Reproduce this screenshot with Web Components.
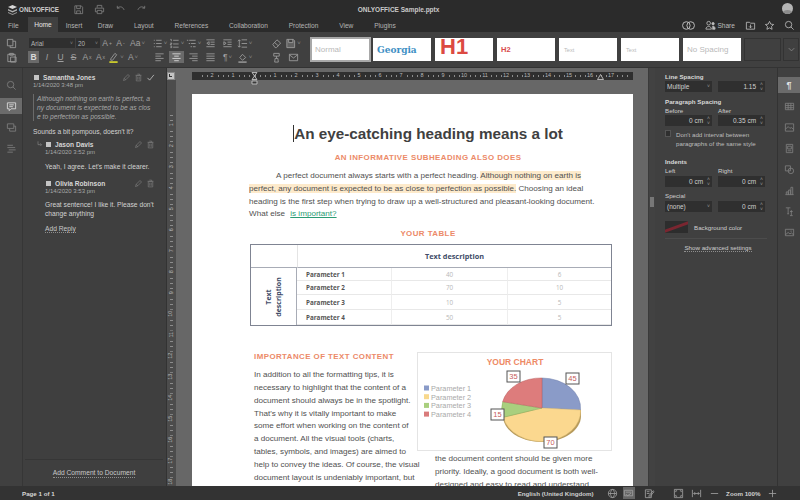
<!DOCTYPE html>
<html lang="en">
<head>
<meta charset="utf-8">
<title>ONLYOFFICE Sample.pptx</title>
<style>
  html, body { margin: 0; height: 100%; background: #404040; overflow: hidden; }
  body { font: 7.4px "Liberation Sans", Arial, sans-serif; color: #d6d6d6; }
</style>
</head>
<body>
<oo-app></oo-app>

<script>
const ICONS = {
  save: '<path d="M2 2h7l1.500 1.500V10.500H2z M4 2v3h4V2 M4 10.500V7.500h4v3"/>',
  print: '<path d="M3.500 4V1.500h5V4 M1.500 4.500h9v4h-2 M3.500 8.500h-2v-4 M3.500 7h5v3.500h-5z"/>',
  undo: '<path d="M2.500 4.500c3-2.500 6-1.500 7.500 2 M2.500 2v2.500H5"/>',
  redo: '<path d="M9.500 4.500c-3-2.500-6-1.500-7.500 2 M9.500 2v2.500H7"/>',
  copy: '<path d="M1.500 1.500h6v7h-6z M4.500 8.500v2h6v-7h-3"/>',
  paste: '<path d="M2 2.500h8v8H2z M4 1.500h4v2H4z M5 5.500h6v5.500H5z"/>',
  bullets: '<path d="M2 2.500h1 M2 6h1 M2 9.500h1 M4.500 2.500h6 M4.500 6h6 M4.500 9.500h6"/>',
  numbers: '<path d="M1.500 1.500h1v2 M1.500 5.500h1.500v1H1.500v1H3 M1.500 9h1.500v1.500h-1.500 M4.500 2.500h6 M4.500 6.500h6 M4.500 10h6"/>',
  multi: '<path d="M1 2.500h1.500 M3.500 2.500h7 M3 6h1.500 M5.500 6h5 M5 9.500h1.500 M7.500 9.500h3"/>',
  indentless: '<path d="M1.500 2h9 M6 4.500h4.500 M6 7h4.500 M1.500 9.500h9 M4.500 4L2 5.750 4.500 7.500z"/>',
  indentmore: '<path d="M1.500 2h9 M6 4.500h4.500 M6 7h4.500 M1.500 9.500h9 M2 4l2.500 1.750L2 7.500z"/>',
  linespace: '<path d="M5 2h6 M5 6h6 M5 10h6 M2.500 2v8 M1 3.500L2.500 2 4 3.500 M1 8.500L2.500 10 4 8.500"/>',
  left: '<path d="M1.500 2h9 M1.500 4.500h6 M1.500 7h9 M1.500 9.500h6"/>',
  center: '<path d="M1.500 2h9 M3.500 4.500h5 M1.500 7h9 M3.500 9.500h5"/>',
  right: '<path d="M1.500 2h9 M4.500 4.500h6 M1.500 7h9 M4.500 9.500h6"/>',
  justify: '<path d="M1.500 2h9 M1.500 4.500h9 M1.500 7h9 M1.500 9.500h9"/>',
  shade: '<path d="M3 6l3-3.500L9.500 6 6 9z"/><path d="M1.500 11h9" stroke-width="1.500"/>',
  hilite: '<path d="M3 7.500l4.500-6 2 1.500-4.500 6H3z"/><path d="M1.500 11h9" stroke="#d8d82c" stroke-width="1.800"/>',
  eraser: '<path d="M2 7l4.500-5L10.500 5.500 6 10.500H4.500z M4 5l4 3.500"/>',
  styles: '<path d="M2 1.500h7l1.500 1.500v7.500H2z M4 1.500v3.500h4.500V1.500" fill="currentColor" fill-opacity=".35"/>',
  brush: '<path d="M3 1.500h6v3H3z M6 4.500V7 M4.500 7h3l.5 4H4z"/>',
  mail: '<path d="M1.500 2.500h9v7h-9z M1.500 3l4.500 3.500L10.500 3"/>',
  search: '<circle cx="5" cy="5" r="3.500"/><path d="M7.500 7.500l3 3"/>',
  comment: '<path d="M1.500 2h9v6.500h-5L3.500 10.500v-2h-2z M3.500 4.200h5 M3.500 6.200h4"/>',
  chat: '<path d="M1.500 2h7v5h-7z M8.500 4.500h2v5.500h-6.500V7"/>',
  nav: '<path d="M1.500 2.500h6 M1.500 5h8.500 M3 7.500h7.500 M1.500 10h6"/>',
  pencil: '<path d="M2 10l1-3 5-5 2 2-5 5z M3 7l2 2"/>',
  trash: '<path d="M3 3.500h6v7H3z M2 3h8 M4.500 1.500h3V3 M5 5v4 M7 5v4"/>',
  check: '<path d="M2 6.500l2.800 3L10.500 2.500"/>',
  reply: '<path d="M3 2v5h5 M6.500 5l2 2-2 2"/>',
  users: '<circle cx="4" cy="6" r="3.500"/><circle cx="8" cy="6" r="3.500"/>',
  share: '<circle cx="4" cy="3.500" r="2"/><path d="M1 10c0-4 6-4 6 0z"/><circle cx="8.800" cy="4" r="1.300" fill="currentColor"/><path d="M8 10h3c0-3-1.500-3.500-3-3" fill="currentColor"/>',
  folder: '<path d="M1.500 2.500h3.500l1 1h4.500v6.500h-9z M6 5v3.500 M4.500 7L6 8.500 7.500 7"/>',
  star: '<path d="M6 1.500l1.400 3 3.100.4-2.300 2.100.6 3.200L6 8.600 3.200 10.200l.6-3.200L1.500 4.900l3.100-.4z"/>',
  table: '<path d="M1.500 2.500h9v7h-9z M1.500 5h9 M1.500 7.300h9 M4.500 2.500v7 M7.500 2.500v7"/>',
  image: '<path d="M1.500 2h9v8h-9z M1.500 8l3-3 2 2 1.500-1 2.500 2"/>',
  slide: '<path d="M2.500 1.500h7v9h-7z M4 3.500h4v3H4z M4 8.500h4"/>',
  shape: '<path d="M1.500 2h5.500v5.500h-5.500z"/><circle cx="7.500" cy="7.500" r="3"/>',
  chart: '<path d="M1.500 10.500h9 M2.500 10.500v-3h2v3 M5 10.500V5.500h2v5 M7.500 10.500V2.500h2v8"/>',
  art: '<path d="M2 2h5 M4.500 2v6.500 M3.500 8.500h2 M8 4.500v6 M6.500 10.500h3 M6.500 6h3"/>',
  mailimg: '<path d="M1.500 2.500h9v7h-9z M1.500 8.500l3-2.500 2 1.500 1.500-1 2.500 2 M7 4.500h1.500"/>',
  globe: '<circle cx="6" cy="6" r="4.500"/><path d="M1.500 6h9 M6 1.500c-3 3-3 6 0 9 M6 1.500c3 3 3 6 0 9"/>',
  spell: '<path d="M1.500 2.500h9v6h-9z M3 4.500h6 M3 6.500l2 2 4-3"/>',
  track: '<path d="M1.500 2h6.500v8.500h-6.500z M3 4h3 M3 6h3 M5 9l5-6 1 1-5 6z"/>',
  fit: '<path d="M1.500 1.500h9v9h-9z M3 4.500V3h1.500 M7.500 3H9v1.500 M3 7.500V9h1.500 M9 7.500V9H7.500"/>',
  fitwidth: '<path d="M1.500 2v8 M10.500 2v8 M3 6h6 M4.500 4.500L3 6l1.500 1.500 M7.500 4.500L9 6 7.500 7.500"/>',
  minus: '<path d="M2 6h8"/>',
  plus: '<path d="M2 6h8 M6 2v8"/>',
  caret: '<path d="M3 4.500l3 3 3-3"/>'
};

class OoIcon extends HTMLElement {
  connectedCallback () {
    if (this.shadowRoot) return;
    const size = this.getAttribute('size') || 11;
    this.attachShadow({mode: 'open'}).innerHTML = `
      <style>:host { display: inline-flex; flex: none; } svg { display: block; }</style>
      <svg width="${size}" height="${size}" viewBox="0 0 12 12" fill="none" stroke="currentColor" stroke-width=".9">${ICONS[this.getAttribute('name')] || ''}</svg>`;
  }
}
customElements.define('oo-icon', OoIcon);

// one toolbar cell: either an icon or slotted glyph text
class OoBtn extends HTMLElement {
  connectedCallback () {
    if (this.shadowRoot) return;
    const name = this.getAttribute('icon');
    const caret = this.hasAttribute('caret');
    this.attachShadow({mode: 'open'}).innerHTML = `
      <style>
      :host {
        display: inline-flex; align-items: center; justify-content: center; gap: 1px;
        width: var(--w, 13px); height: 12px; color: #a0a0a0; flex: none;
        font: 8.500px "Liberation Sans", sans-serif;
      }
      :host([active]) { background: #6a6a6a; color: #e4e4e4; }
      i { font-size: 6px; font-style: normal; color: #8a8a8a; }
      </style>
      ${name ? `<oo-icon name="${name}"></oo-icon>` : '<slot></slot>'}
      ${caret ? '<i>&#709;</i>' : ''}`;
  }
}
customElements.define('oo-btn', OoBtn);

class OoTitlebar extends HTMLElement {
  constructor () {
    super();
    this.attachShadow({mode: 'open'}).innerHTML = `
      <style>
      :host {
        display: flex; align-items: center; height: 19px; background: #2b2b2b; color: #c8c8c8;
        position: relative; padding-left: 8px; gap: 13px;
      }
      .logo { display: flex; align-items: center; gap: 2px; font: bold 6.300px "Liberation Sans", sans-serif; color: #cfcfcf; width: 47px; margin-right: 5px; flex: none; }
      .logo svg { flex: none; }
      .title { position: absolute; left: 0; right: 3px; text-align: center; font: bold 6.500px "Liberation Sans", sans-serif; color: #c9c9c9; }
      .tools { display: flex; gap: 10px; color: #7f7f7f; }
      .avatar { position: absolute; right: 7px; top: 3px; width: 11px; height: 11px; border-radius: 50%; background: #b5b5b5; overflow: hidden; }
      .avatar::after { content: ""; display: block; width: 9px; height: 5px; margin: 7px auto 0; border-radius: 50%; background: #8c8c8c; }
      </style>
      <div class="logo">
        <svg width="9" height="10" viewBox="0 0 9 10"><path d="M4.500 0L9 2 4.500 4 0 2z" fill="#d8d8d8"/><path d="M0 4l4.500 2L9 4v1.500L4.500 7.500 0 5.500z" fill="#b0b0b0"/><path d="M0 7l4.500 2L9 7v1L4.500 10 0 8z" fill="#9a9a9a"/></svg>
        <span>ONLYOFFICE</span>
      </div>
      <div class="tools">
        <oo-icon name="save"></oo-icon><oo-icon name="print"></oo-icon><oo-icon name="undo"></oo-icon><oo-icon name="redo"></oo-icon>
      </div>
      <div class="title">ONLYOFFICE Sample.pptx</div>
      <div class="avatar"></div>`;
  }
}
customElements.define('oo-titlebar', OoTitlebar);

class OoTabs extends HTMLElement {
  constructor () {
    super();
    const tabs = ['File', 'Home', 'Insert', 'Draw', 'Layout', 'References', 'Collaboration', 'Protection', 'View', 'Plugins'];
    this.attachShadow({mode: 'open'}).innerHTML = `
      <style>
      :host {
        display: flex; align-items: stretch; height: 13px; background: #2b2b2b; color: #b4b4b4;
        padding-left: 8px; font: 6.600px "Liberation Sans", sans-serif; position: relative;
      }
      span { display: flex; align-items: center; margin-right: 20.800px; }
      span.near { margin-right: 15.500px; }
      span.on { background: #404040; margin: -2px 8px 0 -6px; padding: 0 6px; color: #e6e6e6; }
      .right { position: absolute; right: 5.500px; top: 0; height: 13px; display: flex; align-items: center; gap: 8px; color: #bcbcbc; }
      .right b { font-weight: normal; margin-left: -7px; }
      </style>
      ${tabs.map((t, i) => `<span class="${i === 1 ? 'on' : i < 3 ? 'near' : ''}">${t}</span>`).join('')}
      <div class="right">
        <oo-icon name="users" size="13"></oo-icon>
        <oo-icon name="share" style="margin-left:2px"></oo-icon><b>Share</b>
        <oo-icon name="folder" style="margin-left:1.500px"></oo-icon>
        <oo-icon name="star"></oo-icon>
        <oo-icon name="search" style="margin-left:1px"></oo-icon>
      </div>`;
  }
}
customElements.define('oo-tabs', OoTabs);

class OoStyleTile extends HTMLElement {
  constructor () {
    super();
    this.attachShadow({mode: 'open'}).innerHTML = `
      <style>
      :host {
        display: flex; align-items: center; width: 58px; height: 23px; box-sizing: border-box;
        background: #fff; padding-left: 4px; flex: none;
        font: 8px "Liberation Sans", sans-serif; color: #b9b9b9;
      }
      :host([selected]) { width: 61px; height: 25px; margin: -1px -2px 0 0; border: 2px solid #a8a8a8; padding-left: 3px; }
      :host([blank]) { background: transparent; outline: 1px solid #333; outline-offset: -1px; width: 37px; margin-left: -1px; }
      </style>
      <slot></slot>`;
  }
}
customElements.define('oo-style-tile', OoStyleTile);

class OoToolbar extends HTMLElement {
  constructor () {
    super();
    this.attachShadow({mode: 'open'}).innerHTML = `
      <style>
      :host {
        display: flex; height: 36px; background: #404040; box-sizing: border-box;
        padding: 5px 0 0 5px; border-bottom: 1px solid #333; color: #b0b0b0;
      }
      .group { display: flex; flex-direction: column; gap: 2px; flex: none; }
      .row { display: flex; align-items: center; height: 12px; }
      .select {
        height: 10px; background: #2f2f2f; color: #b4b4b4; display: flex; align-items: center;
        justify-content: space-between; padding: 0 2px; box-sizing: border-box; flex: none;
        font-size: 6.300px; margin-right: 1px;
      }
      .select i { font-style: normal; font-size: 5px; color: #8a8a8a; }
      .clip { width: 24px; }
      .font { width: 122px; }
      .para { width: 110px; --w: 17px; }
      .para2 { margin-left: 6.500px; --w: 17px; width: 39px; margin-right: 3.500px; }
      .gallery { display: flex; gap: 4px; margin-top: 1px; align-items: flex-start; flex: none; }
      .chev { width: 16px; height: 23px; margin-left: -2px; display: flex; align-items: center; justify-content: center; outline: 1px solid #333; outline-offset: -1px; color: #888; flex: none; }
      .h1 { font: bold 22px/22px "Liberation Sans", sans-serif; color: #dc4a42; margin: -2px 0 0 1px; align-self: flex-start; }
      .h2 { font: bold 7.500px "Liberation Sans", sans-serif; color: #d84a4a; }
      .geo { font: bold 9px "DejaVu Serif", serif; color: #3d8fc4; }
      .tiny { font-size: 5.600px; margin-left: 1px; }
      b { font-size: 8.500px; color: #d8d8d8; }
      </style>
      <div class="group clip">
        <div class="row"><oo-btn icon="copy"></oo-btn></div>
        <div class="row"><oo-btn icon="paste"></oo-btn></div>
      </div>
      <div class="group font">
        <div class="row">
          <div class="select" style="width:46px"><span>Arial</span><i>&#709;</i></div>
          <div class="select" style="width:24px"><span>20</span><i>&#709;</i></div>
          <oo-btn style="--w:13px;margin-left:-.5px">A<sup style="font-size:5px">+</sup></oo-btn>
          <oo-btn style="--w:14px">A<sup style="font-size:5px">-</sup></oo-btn>
          <oo-btn style="--w:20px" caret>Aa</oo-btn>
        </div>
        <div class="row" style="margin-left:-1px">
          <oo-btn active style="--w:11px;margin-right:1px"><b>B</b></oo-btn>
          <oo-btn style="--w:14px"><i>I</i></oo-btn>
          <oo-btn><u>U</u></oo-btn>
          <oo-btn><s>S</s></oo-btn>
          <oo-btn style="--w:14px">A<sup style="font-size:5px">x</sup></oo-btn>
          <oo-btn>A<sub style="font-size:5px">x</sub></oo-btn>
          <oo-btn icon="hilite" style="--w:18px" caret></oo-btn>
          <oo-btn style="--w:16px" caret>A</oo-btn>
        </div>
      </div>
      <div class="group para">
        <div class="row">
          <oo-btn icon="bullets" caret></oo-btn><oo-btn icon="numbers" caret></oo-btn><oo-btn icon="multi" caret></oo-btn>
          <oo-btn icon="indentless"></oo-btn><oo-btn icon="indentmore"></oo-btn><oo-btn icon="linespace" caret></oo-btn>
        </div>
        <div class="row">
          <oo-btn icon="left"></oo-btn><oo-btn icon="center" active style="--w:15px;margin:0 1px"></oo-btn><oo-btn icon="right"></oo-btn>
          <oo-btn icon="justify"></oo-btn><oo-btn caret>&para;</oo-btn><oo-btn icon="shade" caret></oo-btn>
        </div>
      </div>
      <div class="group para2">
        <div class="row"><oo-btn icon="eraser"></oo-btn><oo-btn icon="styles" caret></oo-btn></div>
        <div class="row"><oo-btn icon="brush"></oo-btn><oo-btn icon="mail"></oo-btn></div>
      </div>
      <div class="gallery">
        <oo-style-tile selected>Normal</oo-style-tile>
        <oo-style-tile><span class="geo">Georgia</span></oo-style-tile>
        <oo-style-tile><span class="h1">H1</span></oo-style-tile>
        <oo-style-tile><span class="h2">H2</span></oo-style-tile>
        <oo-style-tile><span class="tiny">Text</span></oo-style-tile>
        <oo-style-tile><span class="tiny">Text</span></oo-style-tile>
        <oo-style-tile>No Spacing</oo-style-tile>
        <oo-style-tile blank></oo-style-tile>
        <div class="chev"><oo-icon name="caret"></oo-icon></div>
      </div>`;
  }
}
customElements.define('oo-toolbar', OoToolbar);

class OoSidebar extends HTMLElement {
  constructor () {
    super();
    const names = (this.getAttribute('icons') || '').split(' ');
    const on = this.getAttribute('on');
    this.attachShadow({mode: 'open'}).innerHTML = `
      <style>
      :host {
        display: flex; flex-direction: column; gap: 5px; width: 22px; flex: none; padding-top: 9px;
        box-sizing: border-box; background: #404040; color: #808080;
      }
      div { height: 16px; display: flex; align-items: center; justify-content: center; font: bold 9px "Liberation Sans", sans-serif; }
      .on { background: #6b6b6b; color: #e2e2e2; }
      </style>
      ${names.map(n => `<div class="${n === on ? 'on' : ''}">${n === 'para' ? '&para;' : `<oo-icon name="${n}"></oo-icon>`}</div>`).join('')}`;
  }
}
customElements.define('oo-sidebar', OoSidebar);

class OoComment extends HTMLElement {
  constructor () {
    super();
    const actions = this.getAttribute('actions').split(' ');
    this.attachShadow({mode: 'open'}).innerHTML = `
      <style>
      :host { display: block; color: #d2d2d2; }
      .head { display: flex; align-items: center; height: 10px; font-weight: bold; color: #d6d6d6; font-size: 6.600px; }
      .sq { width: 5px; height: 5px; background: #c4c4c4; margin: 0 4px 0 1px; }
      .act { margin-left: auto; display: flex; gap: 3px; color: #7c7c7c; }
      .act .ok { color: #dcdcdc; }
      .date { height: 9px; line-height: 9px; color: #a8a8a8; font-size: 6px; margin-bottom: 1px; margin-top: -1px; }
      </style>
      <div class="head"><span class="sq"></span>${this.getAttribute('author')}
        <span class="act">${actions.map(a => `<oo-icon name="${a}" size="9" class="${a === 'check' ? 'ok' : ''}"></oo-icon>`).join('')}</span>
      </div>
      <div class="date">${this.getAttribute('date')}</div>
      <slot></slot>`;
  }
}
customElements.define('oo-comment', OoComment);

class OoComments extends HTMLElement {
  constructor () {
    super();
    this.attachShadow({mode: 'open'}).innerHTML = `
      <style>
      :host {
        display: flex; flex-direction: column; width: 144px; flex: none; box-sizing: border-box;
        border-left: 1px solid #363636; background: #3f3f3f; font: 6.700px/9px "Liberation Sans", sans-serif;
      }
      .list { flex: 1; padding: 4px 11px 0 10px; }
      .quote { margin: 4px 0 6px; border-left: 1px solid #6a6a6a; padding-left: 3px; font-style: italic; color: #a8a8a8; white-space: nowrap; height: 27px; }
      .text { white-space: nowrap; }
      .reply { margin: 3px 0 0 12px; position: relative; }
      .mark { position: absolute; left: -9px; top: 1px; color: #8c8c8c; }
      .link { border-bottom: 1px dotted #8e8e8e; color: #c8c8c8; }
      .foot { height: 26px; margin: 0 3px 0 2px; border-top: 1px solid #363636; display: flex; justify-content: center; align-items: center; }
      </style>
      <div class="list">
        <oo-comment author="Samantha Jones" date="1/14/2020 3:48 pm" actions="pencil trash check">
          <div class="quote">Although nothing on earth is perfect, a<br>ny document is expected to be as clos<br>e to perfection as possible.</div>
          <div class="text">Sounds a bit pompous, doesn't it?</div>
        </oo-comment>
        <div class="reply">
          <oo-icon class="mark" name="reply" size="8"></oo-icon>
          <oo-comment author="Jason Davis" date="1/14/2020 3:52 pm" actions="pencil trash">
            <div class="text" style="margin-top:5px">Yeah, I agree. Let's make it clearer.</div>
          </oo-comment>
        </div>
        <div class="reply" style="margin-top:7px">
          <oo-comment author="Olivia Robinson" date="1/14/2020 3:53 pm" actions="pencil trash">
            <div class="text" style="margin-top:4px">Great sentence! I like it. Please don't<br>change anything</div>
          </oo-comment>
          <div style="margin-top:6px"><span class="link">Add Reply</span></div>
        </div>
      </div>
      <div class="foot"><span class="link">Add Comment to Document</span></div>`;
  }
}
customElements.define('oo-comments', OoComments);

// numbered ruler, laid out as a row (or column) of 21px cells
class OoRuler extends HTMLElement {
  constructor () {
    super();
    const labels = (this.getAttribute('labels') || '').split(',');
    this.attachShadow({mode: 'open'}).innerHTML = `
      <style>
      :host { display: flex; flex: none; overflow: hidden; color: #b8b8b8; font: 5.500px/1 "Liberation Sans", sans-serif; background: #2f2f2f; height: 8px; }
      :host([vertical]) { flex-direction: column; width: 9px; height: auto; background: #4c4c4c; }
      span {
        flex: 0 0 21px; display: flex; align-items: center; justify-content: center;
        background: repeating-linear-gradient(90deg, #8c8c8c 0 1px, transparent 1px 5.250px) 0 55% / 100% 2px no-repeat;
      }
      :host([vertical]) span { background: repeating-linear-gradient(180deg, #8c8c8c 0 1px, transparent 1px 5.250px) 55% 0 / 3px 100% no-repeat; }
      :host([vertical]) span em { transform: rotate(-90deg); }
      em { font-style: normal; padding: 0 1px; background: #2f2f2f; }
      :host([vertical]) em { background: #4c4c4c; }
      </style>
      ${labels.map(l => `<span>${l ? `<em>${l}</em>` : ''}</span>`).join('')}`;
  }
}
customElements.define('oo-ruler', OoRuler);

class OoChart extends HTMLElement {
  constructor () {
    super();
    const box = (x, y, t) => `<rect x="${x}" y="${y}" width="13" height="11" fill="#fff" stroke="#555"/><text x="${x + 6.500}" y="${y + 8}" text-anchor="middle" font-size="7.500" fill="#c65c5c">${t}</text>`;
    const legend = [['#8a9bc8', 'Parameter 1'], ['#f8d88c', 'Parameter 2'], ['#a9cf7e', 'Parameter 3'], ['#d97b7b', 'Parameter 4']];
    this.attachShadow({mode: 'open'}).innerHTML = `
      <style>
      :host { display: block; width: 195px; height: 99px; box-sizing: border-box; border: 1px solid #e4e4e4; background: #fff; }
      svg { display: block; font-family: "Liberation Sans", sans-serif; }
      </style>
      <svg width="193" height="97" viewBox="1 1 193 97">
        <text x="98" y="13" text-anchor="middle" font-size="8.500" font-weight="bold" fill="#ee8a66">YOUR CHART</text>
        ${legend.map(([c, t], i) => `<rect x="7" y="${33.500 + i * 8.700}" width="5" height="5" fill="${c}"/><text x="14" y="${38.800 + i * 8.700}" font-size="7.300" fill="#a9a9a9">${t}</text>`).join('')}
        <path d="M86 58v6c0 14 17 26 39 26s39-12 39-26v-6z" fill="#b69a5c"/>
        <path d="M125 56V26a39 30 0 0 1 38.500 32z" fill="#8a9bc8" stroke="#6d7ca8" stroke-width=".5"/>
        <path d="M125 56l38.500 2a39 30 0 0 1-77.200 7.300z" fill="#fbd88f" stroke="#d8b870" stroke-width=".5"/>
        <path d="M125 56L86.300 65.300a39 30 0 0 1-.6-15.600z" fill="#a9cf7e" stroke="#89ae60" stroke-width=".5"/>
        <path d="M125 56L85.700 49.700A39 30 0 0 1 125 26z" fill="#dd7c7c" stroke="#b85f5f" stroke-width=".5"/>
        ${box(90, 19, 35)}${box(149, 21, 45)}${box(74, 57, 15)}${box(127, 85, 70)}
      </svg>`;
  }
}
customElements.define('oo-chart', OoChart);

class OoDocTable extends HTMLElement {
  constructor () {
    super();
    const rows = [['Parameter 1', 40, 6], ['Parameter 2', 70, 10], ['Parameter 3', 10, 5], ['Parameter 4', 50, 5]];
    this.attachShadow({mode: 'open'}).innerHTML = `
      <style>
      :host { display: grid; grid-template-columns: 46px 94px 116px 1fr; grid-template-rows: 23px 13px 14px 15px 15px; width: 362px; box-sizing: border-box; border: 1px solid #7f8492; margin-left: 1px; font: 6.300px "Open Sans", sans-serif; background: #fff; }
      div { display: flex; align-items: center; justify-content: center; border-bottom: 1px solid #e8e8e8; border-left: 1px solid #eee; color: #b8b8b8; }
      .corner { border: 0; border-bottom: 1.500px solid #a8acb6; }
      .top { grid-column: 2 / 5; font-weight: bold; font-size: 7.300px; color: #414c68; border-left: 1px solid #e4e4e4; border-bottom: 1.500px solid #a8acb6; }
      .side { grid-row: 2 / 6; border: 0; border-right: 1px solid #a8acb6; color: #414c68; font-weight: bold; font-size: 7px; line-height: 10px; text-align: center; }
      .side span { transform: rotate(-90deg); white-space: nowrap; }
      .param { justify-content: flex-start; padding-left: 9px; font-weight: bold; color: #555; border-left: 0; }
      </style>
      <div class="corner"></div><div class="top">Text description</div>
      <div class="side"><span>Text<br>description</span></div>
      ${rows.map(r => `<div class="param">${r[0]}</div><div>${r[1]}</div><div>${r[2]}</div>`).join('')}`;
  }
}
customElements.define('oo-doc-table', OoDocTable);

class OoDoc extends HTMLElement {
  constructor () {
    super();
    this.attachShadow({mode: 'open'}).innerHTML = `
      <style>
      :host {
        display: block; width: 441px; height: 500px; background: #fff; box-sizing: border-box; flex: none;
        padding: 30px 26px 0 57px; color: #505050; font: 8.100px/12.800px "Liberation Sans", sans-serif;
      }
      h1 { margin: 0; font: bold 15.250px/20px "Liberation Sans", sans-serif; color: #404040; text-align: center; }
      h1 span { border-left: 1px solid #333; }
      h2 { margin: 7px 0 6px; font: bold 7.900px/13px "Liberation Sans", sans-serif; letter-spacing: .45px; color: #ec8a68; text-align: center; }
      p { margin: 0; white-space: nowrap; }
      .first { text-indent: 27px; }
      mark { background: #fdeacb; color: inherit; }
      a { color: #2b9b74; text-decoration: underline; margin-left: 3px; }
      .t { margin: 6px 0 4px; }
      .cols { display: grid; grid-template-columns: 163px 195px; margin-top: 24px; margin-left: 5px; }
      .cols h2 { text-align: left; margin: 0 0 6px; }
      .right { padding-top: 2px; }
      .right p { margin: 2px 0 0 18px; }
      </style>
      <h1><span></span>An eye-catching heading means a lot</h1>
      <h2>AN INFORMATIVE SUBHEADING ALSO DOES</h2>
      <p class="first">A perfect document always starts with a perfect heading. <mark>Although nothing on earth is</mark><br>
      <mark>perfect, any document is expected to be as close to perfection as possible.</mark> Choosing an ideal<br>
      heading is the first step when trying to draw up a well-structured and pleasant-looking document.<br>
      What else <a>is important?</a></p>
      <h2 class="t">YOUR TABLE</h2>
      <oo-doc-table></oo-doc-table>
      <div class="cols">
        <div>
          <h2>IMPORTANCE OF TEXT CONTENT</h2>
          <p>In addition to all the formatting tips, it is<br>
          necessary to highlight that the content of a<br>
          document should always be in the spotlight.<br>
          That's why it is vitally important to make<br>
          some effort when working on the content of<br>
          a document. All the visual tools (charts,<br>
          tables, symbols, and images) are aimed to<br>
          help to convey the ideas. Of course, the visual<br>
          document layout is undeniably important, but</p>
        </div>
        <div class="right">
          <oo-chart></oo-chart>
          <p>the document content should be given more<br>
          priority. Ideally, a good document is both well-<br>
          designed and easy to read and understand.</p>
        </div>
      </div>`;
  }
}
customElements.define('oo-doc', OoDoc);

class OoCanvas extends HTMLElement {
  constructor () {
    super();
    const hLabels = ['2', '1', '', '1', '2', '3', '4', '5', '6', '7', '8', '9', '10', '11', '12', '13', '14', '15', '16', '17', ''];
    const vLabels = [];
    for (let i = 1; i <= 18; i++) vLabels.push(String(i));
    this.attachShadow({mode: 'open'}).innerHTML = `
      <style>
      :host { display: flex; flex-direction: column; flex: 1; min-width: 0; background: #676767; border-left: 1px solid #333; overflow: hidden; }
      .top { display: flex; height: 8px; margin-top: 4px; flex: none; }
      .corner { width: 8px; height: 8px; box-sizing: border-box; background: #c4c4c4; border: 1px solid #888; flex: none; margin-right: 1px; }
      .corner::after { content: ""; display: block; width: 2px; height: 2px; margin: 1px; border-left: 1px solid #333; border-bottom: 1px solid #333; }
      .ruler { margin-left: 16px; width: 441px; box-sizing: border-box; padding-left: 9.500px; background: #2f2f2f; position: relative; }
      oo-ruler { width: 431.500px; }
      .mark { position: absolute; top: 0; display: block; }
      .body { flex: 1; display: flex; min-height: 0; }
      .vert { width: 9px; flex: none; overflow: hidden; background: #4c4c4c; }
      .vert oo-ruler { width: 9px; padding-top: 34.500px; box-sizing: border-box; }
      .sheet { margin: 14px 0 0 16px; height: 500px; }
      </style>
      <div class="top">
        <div class="corner"></div>
        <div class="ruler">
          <oo-ruler labels="${hLabels.join(',')}"></oo-ruler>
          <svg class="mark" style="left:58.500px" width="7" height="13" viewBox="0 0 7 13" fill="#3a3a3a" stroke="#d0d0d0" stroke-width=".8"><path d="M1 .5h5L3.500 4z M1 7.500h5L3.500 4z M1 9h5v3H1z"/></svg>
          <svg class="mark" style="left:405px;top:2px" width="7" height="6" viewBox="0 0 7 6" fill="#3a3a3a" stroke="#d0d0d0" stroke-width=".8"><path d="M3.500 .5L6.500 5.500H.5z"/></svg>
        </div>
      </div>
      <div class="body">
        <div class="vert"><oo-ruler vertical labels="${vLabels.join(',')}"></oo-ruler></div>
        <div class="sheet"><oo-doc></oo-doc></div>
      </div>`;
  }
}
customElements.define('oo-canvas', OoCanvas);

class OoSpin extends HTMLElement {
  constructor () {
    super();
    const menu = this.hasAttribute('menu');
    this.attachShadow({mode: 'open'}).innerHTML = `
      <style>
      :host { display: flex; align-items: center; height: 11px; width: 47px; box-sizing: border-box; background: #2f2f2f; color: #cfcfcf; font: 6.500px "Liberation Sans", sans-serif; padding: 0 2px; justify-content: ${menu ? 'space-between' : 'flex-end'}; }
      i { font-style: normal; font-size: 5px; line-height: 4.500px; color: #9a9a9a; margin-left: 4px; text-align: center; }
      </style>
      <slot></slot>
      ${menu ? '<i>&#709;</i>' : '<i>&#708;<br>&#709;</i>'}`;
  }
}
customElements.define('oo-spin', OoSpin);

class OoSettings extends HTMLElement {
  constructor () {
    super();
    this.attachShadow({mode: 'open'}).innerHTML = `
      <style>
      :host { display: block; width: 123px; flex: none; box-sizing: border-box; padding: 4px 0 0 10px; background: #404040; font: 6.200px/9px "Liberation Sans", sans-serif; color: #cfcfcf; border-right: 1px solid #333; }
      h4 { margin: 0; font: bold 6.200px/9px "Liberation Sans", sans-serif; color: #d8d8d8; }
      .grid { display: grid; grid-template-columns: 47px 47px; column-gap: 6px; }
      .mt5 { margin-top: 5px; }
      .chk { display: flex; gap: 5px; margin-top: 4px; white-space: nowrap; color: #bdbdbd; }
      .chk span { width: 6px; height: 7px; background: #2f2f2f; border: 1px solid #555; box-sizing: border-box; flex: none; }
      .mt9 { margin-top: 9px; }
      .mt1 { margin-top: 1px; }
      .color { display: flex; align-items: center; gap: 6px; margin-top: 9px; height: 12px; }
      .swatch { width: 23px; height: 12px; box-sizing: border-box; background: linear-gradient(160deg, #2d2d2d 0 40%, #7a2630 45% 55%, #2d2d2d 60%); }
      .sep { height: 5px; border-bottom: 1px solid #4c4c4c; width: 102px; }
      .adv { width: 106px; text-align: center; margin-top: 4px; }
      .adv span { border-bottom: 1px dotted #8e8e8e; }
      </style>
      <h4>Line Spacing</h4>
      <div class="grid"><oo-spin menu>Multiple</oo-spin><oo-spin>1.15</oo-spin></div>
      <h4 class="mt5">Paragraph Spacing</h4>
      <div class="grid"><span>Before</span><span>After</span><oo-spin>0 cm</oo-spin><oo-spin>0.35 cm</oo-spin></div>
      <div class="chk"><span></span><div>Don't add interval between<br>paragraphs of the same style</div></div>
      <h4 class="mt9">Indents</h4>
      <div class="grid"><span>Left</span><span>Right</span></div>
      <div class="grid mt1"><oo-spin>0 cm</oo-spin><oo-spin>0 cm</oo-spin></div>
      <div style="margin-top:4px">Special</div>
      <div class="grid mt1"><oo-spin menu>(none)</oo-spin><oo-spin>0 cm</oo-spin></div>
      <div class="color"><span class="swatch"></span>Background color</div>
      <div class="sep"></div>
      <div class="adv"><span>Show advanced settings</span></div>`;
  }
}
customElements.define('oo-settings', OoSettings);

class OoStatusbar extends HTMLElement {
  constructor () {
    super();
    this.attachShadow({mode: 'open'}).innerHTML = `
      <style>
      :host { display: flex; align-items: center; height: 14px; background: #333; padding: 0 22.500px 0 22px; color: #d6d6d6; font: bold 6.200px "Liberation Sans", sans-serif; position: relative; z-index: 1; }
      .right { margin-left: auto; display: flex; align-items: center; gap: 6px; color: #a0a0a0; }
      .right span { color: #d0d0d0; }
      .on { background: #666; width: 12px; height: 12px; display: flex; align-items: center; justify-content: center; margin-left: -1.500px; }
      </style>
      <span>Page 1 of 1</span>
      <div class="right">
        <span style="margin-right:7.500px">English (United Kingdom)</span>
        <oo-icon name="globe"></oo-icon>
        <div class="on"><oo-icon name="spell"></oo-icon></div>
        <oo-icon name="track" style="margin:0 12px 0 3.500px"></oo-icon>
        <oo-icon name="fit"></oo-icon>
        <oo-icon name="fitwidth" style="margin-left:1px"></oo-icon>
        <oo-icon name="minus" style="margin-left:1px"></oo-icon>
        <span>Zoom 100%</span>
        <oo-icon name="plus"></oo-icon>
      </div>`;
  }
}
customElements.define('oo-statusbar', OoStatusbar);

class OoApp extends HTMLElement {
  constructor () {
    super();
    this.attachShadow({mode: 'open'}).innerHTML = `
      <style>
      :host { display: flex; flex-direction: column; height: 500px; width: 800px; overflow: hidden; }
      .main { flex: 1; display: flex; min-height: 0; }
      .scroll { width: 7px; flex: none; background: #424242; border-left: 1px solid #3a3a3a; box-sizing: border-box; padding-top: 129px; }
      .scroll span { display: block; width: 4px; height: 10px; margin-left: 1px; background: #777; }
      </style>
      <oo-titlebar></oo-titlebar>
      <oo-tabs></oo-tabs>
      <oo-toolbar></oo-toolbar>
      <div class="main">
        <oo-sidebar icons="search comment chat nav" on="comment"></oo-sidebar>
        <oo-comments></oo-comments>
        <oo-canvas></oo-canvas>
        <div class="scroll"><span></span></div>
        <oo-settings></oo-settings>
        <oo-sidebar icons="para table image slide shape chart art mailimg" on="para"></oo-sidebar>
      </div>
      <oo-statusbar></oo-statusbar>`;
  }
}
customElements.define('oo-app', OoApp);
</script>
</body>
</html>
